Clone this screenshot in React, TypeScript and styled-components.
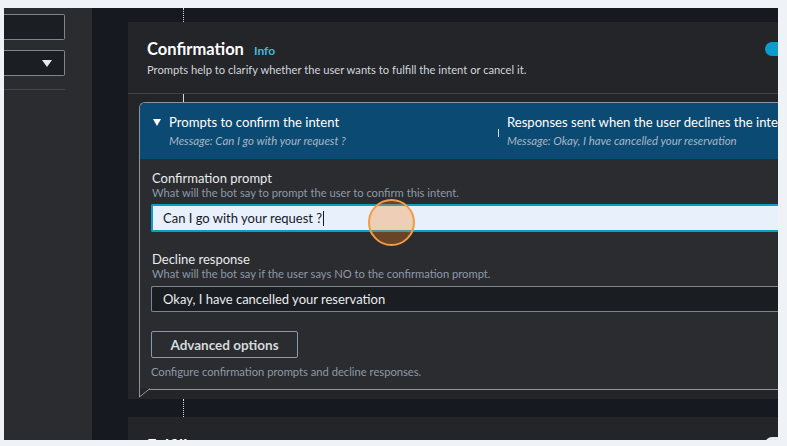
import React from "react";
import styled, { createGlobalStyle } from "styled-components";

const Global = createGlobalStyle`
  html, body { margin: 0; padding: 0; background: #eff2f7; }
  body { font-family: Lato, "Open Sans", sans-serif; }
  * { box-sizing: border-box; }
`;

const Frame = styled.div`
  margin: 8px 0 0 4px;
  width: 774px;
  height: 432px;
  display: grid;
  grid-template-columns: 88px 36px 1fr;
  overflow: hidden;
  background: #16191f;
`;

const SidePanel = styled.div`
  background: #2a2c30;
  padding: 6px 27px 0 0;
  display: flex;
  flex-direction: column;
  gap: 10px;
`;

const SideInput = styled.div`
  height: 26px;
  border: 1px solid #7d8590;
  border-left: none;
  border-radius: 0 2px 2px 0;
  background: #1b1e23;
  display: flex;
  align-items: center;
  justify-content: flex-end;
  padding-right: 12px;
`;

const Caret = styled.span`
  width: 0;
  height: 0;
  border-left: 5px solid transparent;
  border-right: 5px solid transparent;
  border-top: 7px solid #e9ebed;
`;

const SideDivider = styled.div`
  margin-top: 3px;
  height: 1px;
  background: #414750;
`;

const MainCol = styled.div`
  display: flex;
  flex-direction: column;
  min-width: 0;
`;

const Connector = styled.div<{ h: number; dotted?: boolean }>`
  height: ${(p) => p.h}px;
  margin-left: 55px;
  border-left: 1px ${(p) => (p.dotted ? "dotted" : "solid")} #d5dbe1;
  flex-shrink: 0;
`;

const Card = styled.section`
  width: 690px;
  background: #232529;
  flex-shrink: 0;
`;

const CardHeader = styled.header`
  height: 72px;
  padding: 17px 25px 0 19px;
  border-bottom: 1px solid #3c4047;
  display: flex;
  justify-content: space-between;
  align-items: flex-start;
`;

const TitleRow = styled.div`
  display: flex;
  align-items: baseline;
  gap: 10px;
`;

const Title = styled.h2`
  margin: 0;
  font-size: 16.5px;
  line-height: 21px;
  font-weight: 700;
  color: #ffffff;
`;

const InfoLink = styled.span`
  font-size: 12px;
  font-weight: 700;
  color: #44b9d6;
`;

const HeaderDesc = styled.p`
  margin: 3px 0 0;
  font-size: 11.2px;
  line-height: 14px;
  color: #d1d5db;
`;

const Toggle = styled.span`
  margin-top: 3px;
  width: 28px;
  height: 14px;
  border-radius: 7px;
  background: #0a9ccc;
  position: relative;
  &::after {
    content: "";
    position: absolute;
    right: 2px;
    top: 2px;
    width: 10px;
    height: 10px;
    border-radius: 50%;
    background: #ffffff;
  }
`;

const CardBody = styled.div`
  padding: 0 0 9px 11px;
`;

const Stub = styled.div`
  height: 8px;
  margin-left: 44px;
  border-left: 1px solid #d5dbe1;
`;

const Bubble = styled.div`
  position: relative;
  border: 1px solid #8b949e;
  border-right: none;
  border-radius: 6px 0 0 0;
`;

const BubbleTail = styled.svg`
  position: absolute;
  left: -1px;
  bottom: -9px;
`;

const BubbleHeader = styled.div`
  height: 56px;
  background: #0b4a73;
  border-radius: 5px 0 0 0;
  display: flex;
  padding: 11px 0 0 13px;
`;

const Step = styled.div<{ w: number }>`
  width: ${(p) => p.w}px;
  display: flex;
  align-items: flex-start;
  gap: 8px;
  flex-shrink: 0;
`;

const Arrow = styled.span`
  margin-top: 5px;
  width: 0;
  height: 0;
  border-left: 4.5px solid transparent;
  border-right: 4.5px solid transparent;
  border-top: 7px solid #ffffff;
`;

const Sep = styled.span`
  margin-top: 15px;
  width: 1px;
  height: 8px;
  background: #d5dbe1;
`;

const StepTitle = styled.div`
  font-size: 13.1px;
  line-height: 17px;
  color: #ffffff;
  white-space: nowrap;
`;

const StepMsg = styled.div`
  margin-top: 3px;
  font-size: 11.4px;
  line-height: 14px;
  font-style: italic;
  color: #a9b6c3;
  white-space: nowrap;
`;

const BubbleBody = styled.div`
  background: #2a2c30;
  padding: 11px 0 10px 11px;
`;

const Field = styled.div<{ gap?: number }>`
  margin-top: ${(p) => p.gap ?? 0}px;
`;

const Label = styled.div`
  padding-left: 1px;
  font-size: 13px;
  line-height: 16px;
  color: #e9ebed;
`;

const Hint = styled.div`
  padding-left: 1px;
  font-size: 11.2px;
  line-height: 14px;
  color: #8d99a8;
  white-space: nowrap;
`;

const TextBox = styled.div<{ focused?: boolean }>`
  position: relative;
  margin-top: ${(p) => (p.focused ? 4 : 5)}px;
  height: ${(p) => (p.focused ? 28 : 26)}px;
  display: flex;
  align-items: center;
  padding-left: ${(p) => (p.focused ? 10 : 11)}px;
  font-size: 13px;
  border: ${(p) => (p.focused ? "2px solid #0aa0c4" : "1px solid #7d8590")};
  border-right: none;
  border-radius: 2px 0 0 2px;
  background: ${(p) => (p.focused ? "#e8f0fc" : "#1a1d22")};
  color: ${(p) => (p.focused ? "#16191f" : "#e9ebed")};
`;

const TextCaret = styled.span`
  display: inline-block;
  width: 1px;
  height: 15px;
  margin-left: 1px;
  background: #16191f;
`;

const ClickMark = styled.span`
  position: absolute;
  left: 215px;
  top: -7px;
  width: 47px;
  height: 47px;
  border-radius: 50%;
  border: 2px solid #f39a44;
  background: rgba(252, 128, 20, 0.3);
`;

const Button = styled.button`
  margin-top: 19px;
  width: 147px;
  height: 27px;
  border: 1px solid #8d99a8;
  border-radius: 2px;
  background: transparent;
  color: #d5dbdb;
  font-family: inherit;
  font-size: 13.5px;
  font-weight: 700;
  display: block;
`;

const Footnote = styled.div`
  margin-top: 7px;
  font-size: 11.2px;
  line-height: 14px;
  color: #8d99a8;
`;

const NextCard = styled.section`
  width: 690px;
  height: 60px;
  background: #232529;
  flex-shrink: 0;
  padding: 19px 25px 0 19px;
  display: flex;
  justify-content: space-between;
  align-items: flex-start;
`;

const NextToggle = styled.span`
  margin-top: 1px;
  width: 28px;
  height: 14px;
  border-radius: 7px;
  background: #e9ebed;
`;

export default function App() {
  return (
    <>
      <Global />
      <Frame>
        <SidePanel>
          <SideInput />
          <SideInput>
            <Caret />
          </SideInput>
          <SideDivider />
        </SidePanel>
        <div />
        <MainCol>
          <Connector h={14} dotted />
          <Card>
            <CardHeader>
              <div>
                <TitleRow>
                  <Title>Confirmation</Title>
                  <InfoLink>Info</InfoLink>
                </TitleRow>
                <HeaderDesc>
                  Prompts help to clarify whether the user wants to fulfill the intent or cancel it.
                </HeaderDesc>
              </div>
              <Toggle />
            </CardHeader>
            <CardBody>
              <Stub />
              <Bubble>
                <BubbleHeader>
                  <Step w={345}>
                    <Arrow />
                    <div>
                      <StepTitle>Prompts to confirm the intent</StepTitle>
                      <StepMsg>Message: Can I go with your request ?</StepMsg>
                    </div>
                  </Step>
                  <Step w={320}>
                    <Sep />
                    <div>
                      <StepTitle>Responses sent when the user declines the intent</StepTitle>
                      <StepMsg>Message: Okay, I have cancelled your reservation</StepMsg>
                    </div>
                  </Step>
                </BubbleHeader>
                <BubbleBody>
                  <Field>
                    <Label>Confirmation prompt</Label>
                    <Hint>What will the bot say to prompt the user to confirm this intent.</Hint>
                    <TextBox focused>
                      Can I go with your request ?<TextCaret />
                      <ClickMark />
                    </TextBox>
                  </Field>
                  <Field gap={19}>
                    <Label>Decline response</Label>
                    <Hint>What will the bot say if the user says NO to the confirmation prompt.</Hint>
                    <TextBox>Okay, I have cancelled your reservation</TextBox>
                  </Field>
                  <Button>Advanced options</Button>
                  <Footnote>Configure confirmation prompts and decline responses.</Footnote>
                </BubbleBody>
                <BubbleTail width="14" height="10" viewBox="0 0 14 10">
                  <path d="M0.5 0 L0.5 9 L11 0.5" fill="#232529" stroke="#8b949e" strokeWidth="1" />
                </BubbleTail>
              </Bubble>
            </CardBody>
          </Card>
          <Connector h={18} dotted />
          <NextCard>
            <TitleRow>
              <Title>Fulfillment</Title>
            </TitleRow>
            <NextToggle />
          </NextCard>
        </MainCol>
      </Frame>
    </>
  );
}
